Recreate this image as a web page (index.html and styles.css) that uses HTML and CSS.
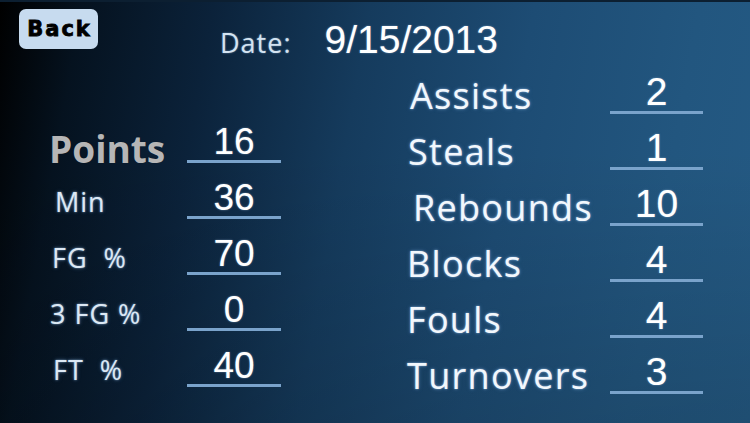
FILE: index.html
```html
<!DOCTYPE html>
<html lang="en">
<head>
<meta charset="utf-8">
<title>Game Stats</title>
<link rel="stylesheet" href="styles.css">
</head>
<body>
<div class="screen">
  <header class="top">
    <button class="back">Back</button>
    <div class="date">
      <span class="date-label">Date:</span>
      <span class="date-value">9/15/2013</span>
    </div>
  </header>
  <main class="stats">
    <section class="col col-left">
      <div class="row"><span class="label label-main">Points</span><span class="value">16</span></div>
      <div class="row"><span class="label label-sm indent-6">Min</span><span class="value">36</span></div>
      <div class="row"><span class="label label-sm indent-3">FG&nbsp;&nbsp;%</span><span class="value">70</span></div>
      <div class="row"><span class="label label-sm indent-1">3 FG %</span><span class="value">0</span></div>
      <div class="row"><span class="label label-sm indent-4">FT&nbsp;&nbsp;%</span><span class="value">40</span></div>
    </section>
    <section class="col col-right">
      <div class="row"><span class="label label-lg indent-3">Assists</span><span class="value value-lg">2</span></div>
      <div class="row"><span class="label label-lg indent-1">Steals</span><span class="value value-lg">1</span></div>
      <div class="row"><span class="label label-lg indent-6">Rebounds</span><span class="value value-lg">10</span></div>
      <div class="row"><span class="label label-lg">Blocks</span><span class="value value-lg">4</span></div>
      <div class="row"><span class="label label-lg">Fouls</span><span class="value value-lg">4</span></div>
      <div class="row"><span class="label label-lg">Turnovers</span><span class="value value-lg">3</span></div>
    </section>
  </main>
</div>
</body>
</html>
```

FILE: styles.css
```css
* { box-sizing: border-box; }
html, body { margin: 0; padding: 0; background: #000; }

.screen {
  width: 750px;
  height: 423px;
  overflow: hidden;
  border-top: 2px solid #0c1f31;
  background:
    linear-gradient(to bottom, rgba(0,0,0,0) 35%, rgba(0,0,0,0.14) 100%),
    linear-gradient(100deg, #000 0%, #05121f 10%, #0b223a 26%, #153b5d 45%, #1d4c74 65%, #22567f 85%, #245a84 100%);
  font-family: "Open Sans", Lato, sans-serif;
  color: #fff;
}

.top {
  height: 56px;
  display: flex;
  align-items: flex-start;
  padding: 7px 0 0 19px;
}

.back {
  width: 79px;
  height: 40px;
  border: none;
  border-radius: 7px;
  background: #c7dbef;
  color: #000;
  font-family: "DejaVu Sans", sans-serif;
  font-weight: 900;
  font-size: 21px;
  letter-spacing: 2px;
  -webkit-text-stroke: 0.8px #000;
  padding: 0 0 0 2px;
  display: flex;
  align-items: center;
  justify-content: center;
}

.date {
  display: flex;
  align-items: baseline;
  margin: 11px 0 0 122px;
}

.date-label {
  font-size: 27px;
  letter-spacing: 1px;
  color: #d4e3f1;
  text-shadow: 0 0 2px rgba(170, 210, 250, 0.6);
}

.date-value {
  margin-left: 33px;
  font-family: "Liberation Sans", Arial, sans-serif;
  font-size: 39px;
  line-height: 1;
  color: #fff;
  text-shadow: 0 0 2px rgba(200, 225, 255, 0.5);
}

.stats {
  display: grid;
  grid-template-columns: 407px 1fr;
}

.col { display: flex; flex-direction: column; }
.col-left { padding: 49px 0 0 49px; }

.row {
  height: 56px;
  display: flex;
  align-items: flex-end;
}

.col-left .label { width: 138px; }
.col-right .label { width: 203px; }

.label {
  line-height: 1;
  white-space: pre;
}

.label-main {
  font-size: 37px;
  font-weight: 700;
  color: #b6b6b6;
  margin-bottom: -4px;
}

.label-sm {
  font-size: 27px;
  letter-spacing: 1px;
  color: #dce8f4;
  margin-bottom: 4px;
  text-shadow: 0 0 2px rgba(170, 210, 250, 0.7), 0 0 4px rgba(120, 170, 230, 0.35);
}

.label-lg {
  font-size: 36px;
  letter-spacing: 1.3px;
  color: #f2f7fc;
  text-shadow: 0 0 2px rgba(180, 215, 255, 0.7), 0 0 4px rgba(120, 170, 230, 0.35);
}

.indent-1 { padding-left: 1px; }
.indent-3 { padding-left: 3px; }
.indent-4 { padding-left: 4px; }
.indent-6 { padding-left: 6px; }

.value {
  width: 94px;
  text-align: center;
  font-family: "Liberation Sans", Arial, sans-serif;
  font-size: 37px;
  line-height: 36px;
  color: #fff;
  border-bottom: 3px solid #7aa3cb;
  text-shadow: 0 0 2px rgba(200, 225, 255, 0.5);
}

.value-lg {
  width: 93px;
  font-size: 39px;
  line-height: 38px;
}
```
